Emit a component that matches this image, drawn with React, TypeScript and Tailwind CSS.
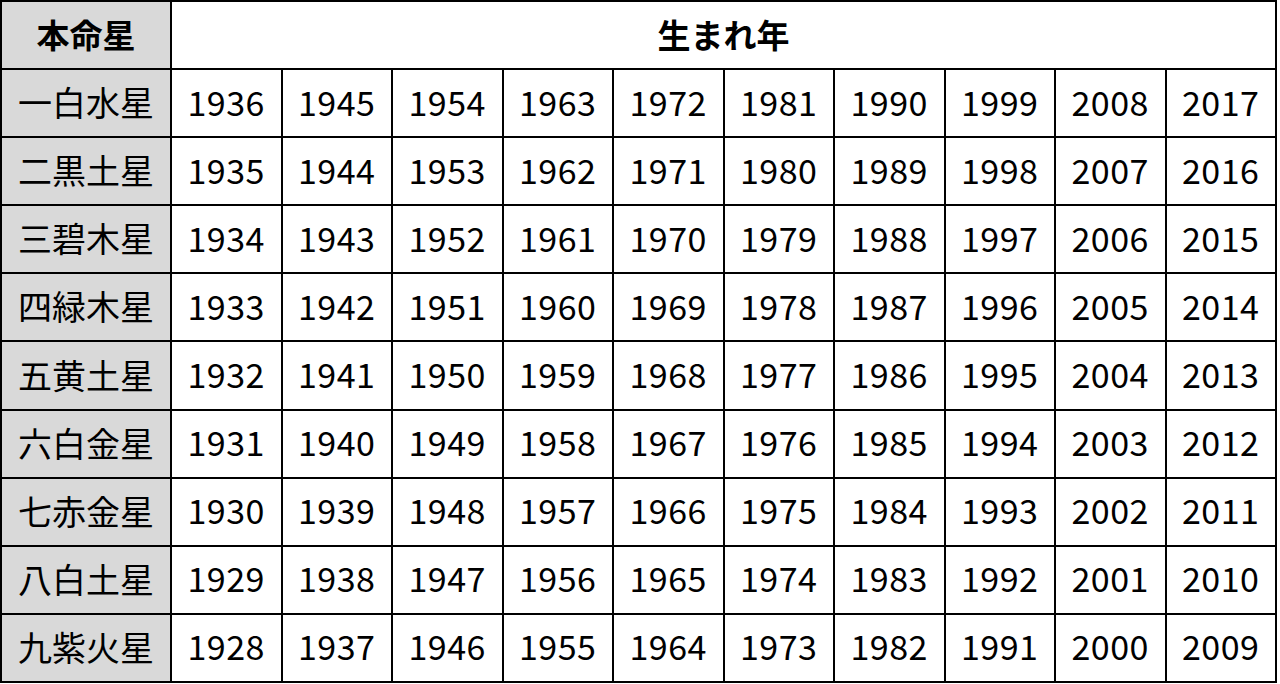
import React from "react";

const stars = ["一白水星", "二黒土星", "三碧木星", "四緑木星", "五黄土星", "六白金星", "七赤金星", "八白土星", "九紫火星"];

export default function App() {
  return (
    <div
      className="w-[1280px] h-[684px] bg-white text-black"
      style={{ fontFamily: '"Noto Sans CJK JP", "Noto Sans", sans-serif' }}
    >
      <div className="grid w-[1277px] h-[683px] grid-cols-[168px_repeat(10,1fr)] grid-rows-[repeat(10,1fr)] gap-[2px] bg-black p-[2px]">
        <div className="flex items-center justify-center bg-[#d9d9d9] pb-[2px] text-[33px] font-bold leading-none">本命星</div>
        <div className="col-span-10 flex items-center justify-center bg-white pb-[2px] text-[33px] font-bold leading-none">生まれ年</div>
        {stars.map((s, i) => (
          <React.Fragment key={s}>
            <div className="flex items-center justify-center bg-[#d9d9d9] pb-[2px] text-[34px] leading-none">{s}</div>
            {Array.from({ length: 10 }, (_, j) => (
              <div key={j} className="flex items-center justify-center bg-white pb-[3px] text-[34px] leading-none tracking-[0.5px]">
                {1936 - i + j * 9}
              </div>
            ))}
          </React.Fragment>
        ))}
      </div>
    </div>
  );
}
